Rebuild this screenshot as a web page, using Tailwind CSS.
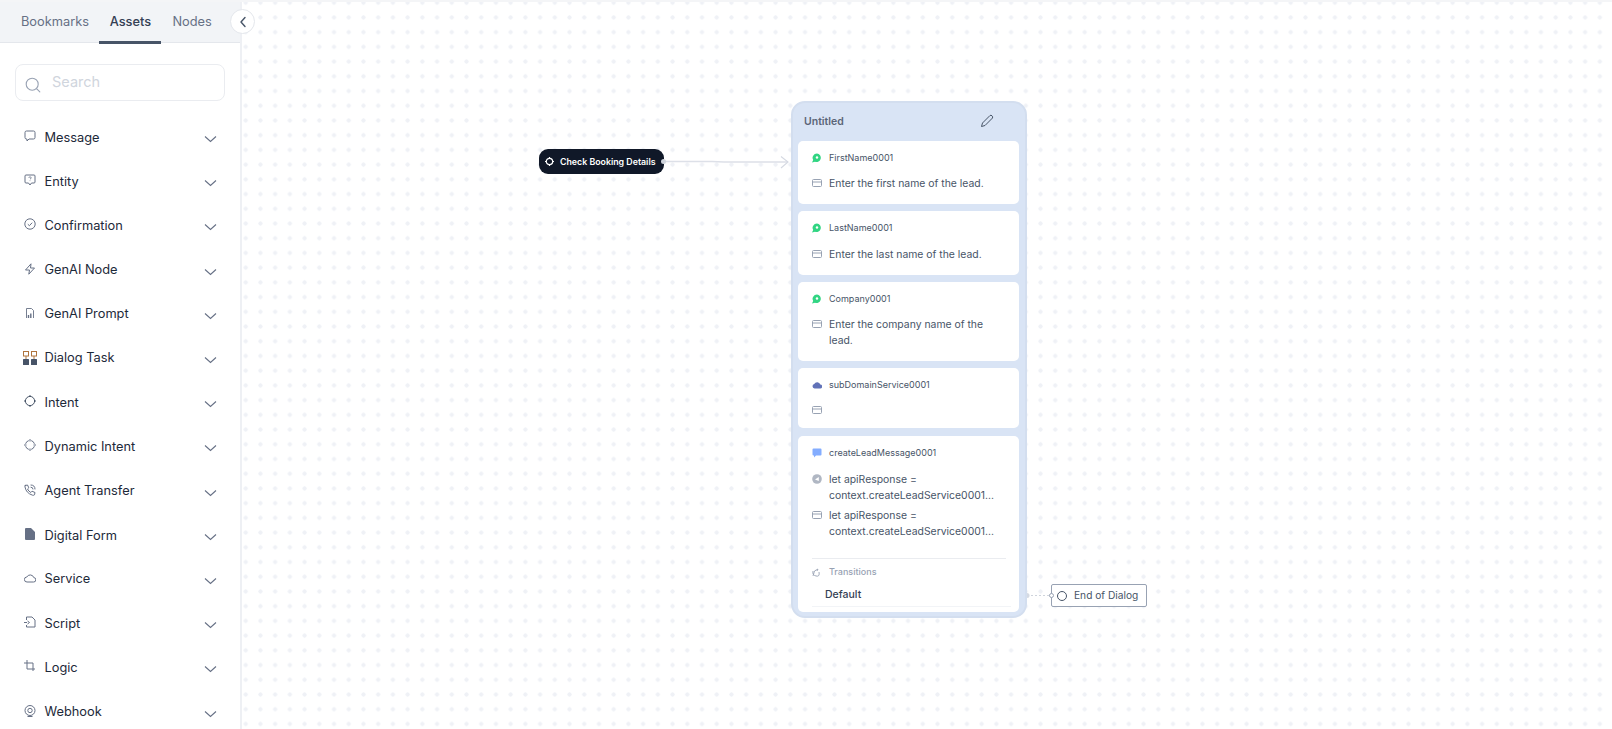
<!DOCTYPE html>
<html lang="en">
<head>
    <meta charset="UTF-8" />
    <title>Dialog Builder</title>
    <script src="https://cdn.jsdelivr.net/npm/@tailwindcss/browser@4"></script>
</head>
<body class="h-[729px] overflow-hidden bg-white font-['Inter',sans-serif] relative">
<div class="absolute left-0 top-0 w-full h-[2px] bg-[#f4f5f7] z-20"></div>
<div class="flex h-[729px]">
    <!-- Left panel -->
    <aside class="w-[242px] shrink-0 bg-white border-r-2 border-[#eef0f4] flex flex-col relative z-10">
        <div class="h-[43px] shrink-0 bg-[#f2f4f7] border-b border-[#e4e7ec] flex pt-[2px] text-[12.8px] text-[#667085]">
            <div class="pl-[21px] pr-[10.500px] pt-[10px]">Bookmarks</div>
            <div class="w-[62px] shrink-0 text-center pt-[10px] font-medium text-[#344054] border-b-[3px] border-[#475467] h-[42px]">Assets</div>
            <div class="pl-[11px] pt-[10px]">Nodes</div>
        </div>
        <div class="absolute left-[230px] top-[9px] w-[25px] h-[25px] rounded-full bg-white border border-[#e4e7ec] flex items-center justify-center">
            <svg class="w-[14px] h-[14px]" viewBox="0 0 14 14" fill="none" stroke="#475467" stroke-width="1.4" stroke-linecap="round" stroke-linejoin="round"><path d="M9 2.500 5 7l4 4.500"/></svg>
        </div>

        <div class="mx-[15px] mt-[21px] h-[37px] shrink-0 border border-[#eaecf0] rounded-lg flex items-center">
            <svg class="w-[16px] h-[16px] ml-[9px] mt-[4px]" viewBox="0 0 16 16" fill="none" stroke="#98a2b3" stroke-width="1.1" stroke-linecap="round"><circle cx="7.200" cy="7.200" r="6"/><path d="m11.800 11.800 3 3"/></svg>
            <span class="ml-[11px] text-[14.500px] text-[#d0d5dd] -mt-[2px]">Search</span>
        </div>

        <ul class="mt-[15px] text-[12.8px] text-[#1d2939]">
            <li class="h-[44.200px] flex items-center pl-[24px] pr-[23px]">
                <svg class="w-[12px] h-[12px] -mt-[4px]" viewBox="0 0 12 12" fill="none" stroke="#667085" stroke-linejoin="round"><path d="M2.500 1h7A1.500 1.500 0 0 1 11 2.500V7.500A1.500 1.500 0 0 1 9.500 9H5L3 11V9H2.500A1.500 1.500 0 0 1 1 7.500V2.500A1.500 1.500 0 0 1 2.500 1Z"/></svg>
                <span class="ml-[8.500px] flex-1 -mt-[1px]">Message</span>
                <svg class="w-[13px] h-[8px] mt-[2px]" viewBox="0 0 13 8" fill="none" stroke="#667085" stroke-width="1.100"><path d="m1 1.500 5.500 5 5.500-5"/></svg>
            </li>
            <li class="h-[44.200px] flex items-center pl-[24px] pr-[23px]">
                <svg class="w-[12px] h-[12px] -mt-[4px]" viewBox="0 0 12 12" fill="none" stroke="#667085" stroke-linejoin="round"><path d="M2 1h8a1 1 0 0 1 1 1v6a1 1 0 0 1-1 1H7.500L6 11 4.500 9H2a1 1 0 0 1-1-1V2a1 1 0 0 1 1-1Z"/><path d="M4.800 3.800Q5 2.800 6 2.800T7.200 3.800Q7.200 4.600 6 5.200M6 6.500v.6" stroke-width=".8"/></svg>
                <span class="ml-[8.500px] flex-1 -mt-[2px]">Entity</span>
                <svg class="w-[13px] h-[8px] mt-[2px]" viewBox="0 0 13 8" fill="none" stroke="#667085" stroke-width="1.100"><path d="m1 1.500 5.500 5 5.500-5"/></svg>
            </li>
            <li class="h-[44.200px] flex items-center pl-[24px] pr-[23px]">
                <svg class="w-[12px] h-[12px] -mt-[4px]" viewBox="0 0 12 12" fill="none" stroke="#667085"><circle cx="6" cy="6" r="5.200"/><path d="m3.800 6.200 1.600 1.500 2.800-3"/></svg>
                <span class="ml-[8.500px] flex-1 -mt-[2px]">Confirmation</span>
                <svg class="w-[13px] h-[8px] mt-[2px]" viewBox="0 0 13 8" fill="none" stroke="#667085" stroke-width="1.100"><path d="m1 1.500 5.500 5 5.500-5"/></svg>
            </li>
            <li class="h-[44.200px] flex items-center pl-[24px] pr-[23px]">
                <svg class="w-[12px] h-[12px] -mt-[4px]" viewBox="0 0 12 12" fill="none" stroke="#667085" stroke-linejoin="round"><path d="M7 .8 1.500 7H5.500L4.800 11.200 10.500 5H6.500Z"/></svg>
                <span class="ml-[8.500px] flex-1 -mt-[2px]">GenAI Node</span>
                <svg class="w-[13px] h-[8px] mt-[2px]" viewBox="0 0 13 8" fill="none" stroke="#667085" stroke-width="1.100"><path d="m1 1.500 5.500 5 5.500-5"/></svg>
            </li>
            <li class="h-[44.200px] flex items-center pl-[24px] pr-[23px]">
                <svg class="w-[12px] h-[12px] -mt-[4px]" viewBox="0 0 12 12" fill="none" stroke="#667085" stroke-width=".9" stroke-linejoin="round"><path d="M2.500 11V1.500H7.500L9.500 3.500V11"/><path d="M4.500 11V8M6.800 11V6.500" stroke-width="1.400"/></svg>
                <span class="ml-[8.500px] flex-1 -mt-[2px]">GenAI Prompt</span>
                <svg class="w-[13px] h-[8px] mt-[2px]" viewBox="0 0 13 8" fill="none" stroke="#667085" stroke-width="1.100"><path d="m1 1.500 5.500 5 5.500-5"/></svg>
            </li>
            <li class="h-[44.200px] flex items-center pl-[23px] pr-[23px]">
                <svg class="w-[14px] h-[14px] -mt-[2px]" viewBox="0 0 14 14" fill="none"><rect x=".5" y=".5" width="5" height="4.500" stroke="#b0743c"/><rect x="8.500" y=".5" width="5" height="4.500" stroke="#b0743c"/><rect x="0" y="8" width="6" height="6" rx=".5" fill="#475467"/><rect x="8" y="8" width="6" height="6" rx=".5" fill="#475467"/><path d="M3 5v3M11 5v3" stroke="#b0743c"/></svg>
                <span class="ml-[7.500px] flex-1 -mt-[2px]">Dialog Task</span>
                <svg class="w-[13px] h-[8px] mt-[2px]" viewBox="0 0 13 8" fill="none" stroke="#667085" stroke-width="1.100"><path d="m1 1.500 5.500 5 5.500-5"/></svg>
            </li>
            <li class="h-[44.200px] flex items-center pl-[24px] pr-[23px]">
                <svg class="w-[12px] h-[12px] -mt-[4px]" viewBox="0 0 12 12" fill="none" stroke="#475467"><circle cx="6" cy="6" r="4.600"/><path d="M6 0v1.400M6 10.600V12M0 6h1.400M10.600 6H12"/></svg>
                <span class="ml-[8.500px] flex-1 -mt-[2px]">Intent</span>
                <svg class="w-[13px] h-[8px] mt-[2px]" viewBox="0 0 13 8" fill="none" stroke="#667085" stroke-width="1.100"><path d="m1 1.500 5.500 5 5.500-5"/></svg>
            </li>
            <li class="h-[44.200px] flex items-center pl-[24px] pr-[23px]">
                <svg class="w-[12px] h-[12px] -mt-[4px]" viewBox="0 0 12 12" fill="none" stroke="#667085"><path d="M7.200 1.600A4.600 4.600 0 0 1 10.400 4.800M10.400 7.200A4.600 4.600 0 0 1 7.200 10.400M4.800 10.400A4.600 4.600 0 0 1 1.600 7.200M1.600 4.800A4.600 4.600 0 0 1 4.800 1.600"/><path d="M6 0v2.500M6 9.500V12M0 6h2.500M9.500 6H12"/></svg>
                <span class="ml-[8.500px] flex-1 -mt-[2px]">Dynamic Intent</span>
                <svg class="w-[13px] h-[8px] mt-[2px]" viewBox="0 0 13 8" fill="none" stroke="#667085" stroke-width="1.100"><path d="m1 1.500 5.500 5 5.500-5"/></svg>
            </li>
            <li class="h-[44.200px] flex items-center pl-[24px] pr-[23px]">
                <svg class="w-[12px] h-[12px] -mt-[4px]" viewBox="0 0 12 12" fill="none" stroke="#667085" stroke-linecap="round" stroke-linejoin="round"><path d="M1.200 1.500 3.500 1 4.800 3.800 3.500 5Q4.500 7.200 6.800 8.500L8 7.200 11 8.500 10.500 10.800Q10 11.500 8.500 11.200 2 9 1 3Q.8 2 1.200 1.500Z"/><path d="M7 1Q11 1 11 5M7 3.200Q9 3.200 9 5"/></svg>
                <span class="ml-[8.500px] flex-1 -mt-[2px]">Agent Transfer</span>
                <svg class="w-[13px] h-[8px] mt-[2px]" viewBox="0 0 13 8" fill="none" stroke="#667085" stroke-width="1.100"><path d="m1 1.500 5.500 5 5.500-5"/></svg>
            </li>
            <li class="h-[44.200px] flex items-center pl-[24px] pr-[23px]">
                <svg class="w-[12px] h-[12px] -mt-[4px]" viewBox="0 0 12 12" fill="#667085"><path d="M2 0H7L11 4V11A1 1 0 0 1 10 12H2A1 1 0 0 1 1 11V1A1 1 0 0 1 2 0Z"/></svg>
                <span class="ml-[8.500px] flex-1 -mt-[1px]">Digital Form</span>
                <svg class="w-[13px] h-[8px] mt-[2px]" viewBox="0 0 13 8" fill="none" stroke="#667085" stroke-width="1.100"><path d="m1 1.500 5.500 5 5.500-5"/></svg>
            </li>
            <li class="h-[44.200px] flex items-center pl-[24px] pr-[23px]">
                <svg class="w-[12px] h-[12px] -mt-[4px]" viewBox="0 0 12 12" fill="none" stroke="#667085" stroke-linejoin="round"><path d="M3 10H9.500A2.200 2.200 0 0 0 9.800 5.600 3.800 3.800 0 0 0 2.800 5 2.500 2.500 0 0 0 3 10Z"/></svg>
                <span class="ml-[8.500px] flex-1 -mt-[2px]">Service</span>
                <svg class="w-[13px] h-[8px] mt-[2px]" viewBox="0 0 13 8" fill="none" stroke="#667085" stroke-width="1.100"><path d="m1 1.500 5.500 5 5.500-5"/></svg>
            </li>
            <li class="h-[44.200px] flex items-center pl-[24px] pr-[23px]">
                <svg class="w-[12px] h-[12px] -mt-[4px]" viewBox="0 0 12 12" fill="none" stroke="#667085" stroke-linejoin="round"><path d="M2.500 4V1H8L11 4V11H2.500V9"/><path d="M0 6.500H3M3.500 5 5.500 6.500 3.500 8"/></svg>
                <span class="ml-[8.500px] flex-1 -mt-[2px]">Script</span>
                <svg class="w-[13px] h-[8px] mt-[2px]" viewBox="0 0 13 8" fill="none" stroke="#667085" stroke-width="1.100"><path d="m1 1.500 5.500 5 5.500-5"/></svg>
            </li>
            <li class="h-[44.200px] flex items-center pl-[24px] pr-[23px]">
                <svg class="w-[12px] h-[12px] -mt-[4px]" viewBox="0 0 12 12" fill="none" stroke="#667085"><path d="M3 0V9H11M0 3H9V11"/></svg>
                <span class="ml-[8.500px] flex-1 -mt-[2px]">Logic</span>
                <svg class="w-[13px] h-[8px] mt-[2px]" viewBox="0 0 13 8" fill="none" stroke="#667085" stroke-width="1.100"><path d="m1 1.500 5.500 5 5.500-5"/></svg>
            </li>
            <li class="h-[44.200px] flex items-center pl-[24px] pr-[23px]">
                <svg class="w-[12px] h-[12px] -mt-[4px]" viewBox="0 0 12 12" fill="none" stroke="#667085"><circle cx="6" cy="5.500" r="5"/><circle cx="6" cy="5.500" r="2.200"/><path d="M3.500 11.500h5"/></svg>
                <span class="ml-[8.500px] flex-1 -mt-[2px]">Webhook</span>
                <svg class="w-[13px] h-[8px] mt-[2px]" viewBox="0 0 13 8" fill="none" stroke="#667085" stroke-width="1.100"><path d="m1 1.500 5.500 5 5.500-5"/></svg>
            </li>
        </ul>
    </aside>

    <!-- Canvas -->
    <main class="relative flex-1 bg-[radial-gradient(circle,#eff1f6_1.800px,transparent_2.400px)] bg-[length:14.720px_14.720px] bg-[position:-3.660px_-4.660px]">
        <!-- connectors -->
        <svg class="absolute left-0 top-0 w-[1370px] h-[729px]" fill="none">
            <path d="M421 161.500H470Q476 161.500 482 162H546" stroke="#dde0e8" stroke-width="1.500"/>
            <path d="M539 156.500 546 162 539 168" stroke="#d5d9e2" stroke-width="1.100"/>
            <path d="M785 595.500H808" stroke="#cfd4dc" stroke-dasharray="2 2"/>
            <circle cx="785" cy="595.500" r="2.500" fill="#d5dae3"/>
        </svg>

        <!-- start node -->
        <div class="absolute left-[297px] top-[149px] w-[125px] h-[25px] rounded-[9px] bg-[#101828] flex items-center pl-[6px] text-[8.800px] font-semibold text-white whitespace-nowrap">
            <svg class="w-[9px] h-[9px]" viewBox="0 0 9 9" fill="none" stroke="#fff" stroke-width="1.200"><circle cx="4.500" cy="4.500" r="3.200"/><path d="M4.500 0v1.300M4.500 7.700V9M0 4.500h1.300M7.700 4.500H9"/></svg>
            <span class="ml-[6px]">Check Booking Details</span>
            <span class="absolute -right-[2px] top-[10px] w-[5px] h-[5px] rounded-full bg-[#d0d5dd]"></span>
        </div>

        <!-- dialog task node -->
        <div class="absolute left-[549px] top-[101px] w-[236px] h-[517px] rounded-[14px] bg-[#d9e4f5] border-2 border-[#d3deef] pl-[5px] pr-[6px] text-[#475467]">
            <div class="h-[38px] flex items-center justify-between pl-[6px] pr-[25px]">
                <span class="text-[10.500px] font-semibold text-[#5b6577] -mt-[1px]">Untitled</span>
                <svg class="w-[14px] h-[14px] -mt-[3px]" viewBox="0 0 14 14" fill="none" stroke="#475467" stroke-linejoin="round"><path d="M1.500 12.500 2.500 9 10 1.500Q11 .8 12 1.800T12.500 4L5 11.500Z"/></svg>
            </div>

            <div class="h-[63px] bg-white rounded-[5px] pl-[14px] pt-[11px] mb-[7px]">
                <div class="flex items-center h-[12px] text-[9px]">
                    <svg class="w-[10px] h-[10px]" viewBox="0 0 10 10"><path d="M5 .5A4.300 4.300 0 1 1 3 8.800L0 9.500 1.200 7A4.300 4.300 0 0 1 5 .5Z" fill="#32d583"/><circle cx="5" cy="4.500" r="1.200" fill="#fff"/></svg>
                    <span class="ml-[7px]">FirstName0001</span>
                </div>
                <div class="flex items-start mt-[12px] text-[10.400px] leading-[15.500px]">
                    <svg class="w-[10px] h-[8px] mt-[3px] shrink-0" viewBox="0 0 10 8" fill="none" stroke="#98a2b3"><rect x=".5" y=".5" width="9" height="7" rx="1"/><path d="M1 3H9"/></svg>
                    <span class="ml-[7px]">Enter the first name of the lead.</span>
                </div>
            </div>

            <div class="h-[64px] bg-white rounded-[5px] pl-[14px] pt-[11px] mb-[7px]">
                <div class="flex items-center h-[12px] text-[9px]">
                    <svg class="w-[10px] h-[10px]" viewBox="0 0 10 10"><path d="M5 .5A4.300 4.300 0 1 1 3 8.800L0 9.500 1.200 7A4.300 4.300 0 0 1 5 .5Z" fill="#32d583"/><circle cx="5" cy="4.500" r="1.200" fill="#fff"/></svg>
                    <span class="ml-[7px]">LastName0001</span>
                </div>
                <div class="flex items-start mt-[13px] text-[10.400px] leading-[15.500px]">
                    <svg class="w-[10px] h-[8px] mt-[3px] shrink-0" viewBox="0 0 10 8" fill="none" stroke="#98a2b3"><rect x=".5" y=".5" width="9" height="7" rx="1"/><path d="M1 3H9"/></svg>
                    <span class="ml-[7px]">Enter the last name of the lead.</span>
                </div>
            </div>

            <div class="h-[79px] bg-white rounded-[5px] pl-[14px] pt-[11px] mb-[7px]">
                <div class="flex items-center h-[12px] text-[9px]">
                    <svg class="w-[10px] h-[10px]" viewBox="0 0 10 10"><path d="M5 .5A4.300 4.300 0 1 1 3 8.800L0 9.500 1.200 7A4.300 4.300 0 0 1 5 .5Z" fill="#32d583"/><circle cx="5" cy="4.500" r="1.200" fill="#fff"/></svg>
                    <span class="ml-[7px]">Company0001</span>
                </div>
                <div class="flex items-start mt-[12px] text-[10.400px] leading-[15.500px] pr-[20px]">
                    <svg class="w-[10px] h-[8px] mt-[3px] shrink-0" viewBox="0 0 10 8" fill="none" stroke="#98a2b3"><rect x=".5" y=".5" width="9" height="7" rx="1"/><path d="M1 3H9"/></svg>
                    <span class="ml-[7px]">Enter the company name of the lead.</span>
                </div>
            </div>

            <div class="h-[60px] bg-white rounded-[5px] pl-[14px] pt-[11px] mb-[8px]">
                <div class="flex items-center h-[12px] text-[9px]">
                    <svg class="w-[10px] h-[10px]" viewBox="0 0 10 10" fill="#6172b8"><path d="M2.500 8.500H8A2 2 0 0 0 8.300 4.500 3.300 3.300 0 0 0 2.200 4 2.300 2.300 0 0 0 2.500 8.500Z"/></svg>
                    <span class="ml-[7px]">subDomainService0001</span>
                </div>
                <div class="flex items-start mt-[12px]">
                    <svg class="w-[10px] h-[8px] mt-[3px] shrink-0" viewBox="0 0 10 8" fill="none" stroke="#98a2b3"><rect x=".5" y=".5" width="9" height="7" rx="1"/><path d="M1 3H9"/></svg>
                </div>
            </div>

            <div class="h-[176px] bg-white rounded-[5px] pl-[14px] pt-[11px]">
                <div class="flex items-center h-[12px] text-[9px]">
                    <svg class="w-[10px] h-[10px]" viewBox="0 0 10 10" fill="#84adff"><path d="M1.500 .5H8.500A1 1 0 0 1 9.500 1.500V6.500A1 1 0 0 1 8.500 7.500H4L2 9.500V7.500H1.500A1 1 0 0 1 .5 6.500V1.500A1 1 0 0 1 1.500 .5Z"/></svg>
                    <span class="ml-[7px]">createLeadMessage0001</span>
                </div>
                <div class="flex items-start mt-[13px] text-[10.400px] leading-[15.500px]">
                    <svg class="w-[10px] h-[10px] mt-[2px] shrink-0" viewBox="0 0 10 10"><circle cx="5" cy="5" r="4.800" fill="#b0b7c3"/><path d="M6.800 3 3 5.500 6.800 7Z" fill="#fff"/></svg>
                    <span class="ml-[7px]">let apiResponse =<br />context.createLeadService0001...</span>
                </div>
                <div class="flex items-start mt-[5px] text-[10.400px] leading-[15.500px]">
                    <svg class="w-[10px] h-[8px] mt-[3px] shrink-0" viewBox="0 0 10 8" fill="none" stroke="#98a2b3"><rect x=".5" y=".5" width="9" height="7" rx="1"/><path d="M1 3H9"/></svg>
                    <span class="ml-[7px]">let apiResponse =<br />context.createLeadService0001...</span>
                </div>
                <div class="mr-[13px] mt-[19px] border-t border-[#eaecf0] h-[27px] flex items-center text-[9px] font-medium text-[#98a2b3]">
                    <svg class="w-[8px] h-[9px]" viewBox="0 0 8 9" fill="none" stroke="#98a2b3" stroke-width=".9"><path d="M1 3Q0 7 4 8T7 4M1 8 2.500 3 6 1 5 3"/></svg>
                    <span class="ml-[9px]">Transitions</span>
                </div>
                <div class="ml-[13px] mr-[13px] h-[21px] pb-[2px] text-[10.500px] font-medium text-[#344054] flex items-center">Default</div>
                <div class="mr-[8px] border-t border-[#f2f4f7]"></div>
            </div>
        </div>

        <!-- end node -->
        <div class="absolute left-[809px] top-[584px] w-[96px] h-[23px] bg-white border border-[#98a2b3] rounded-[2px] flex items-center pl-[5px] text-[10.200px] text-[#475467]">
            <span class="w-[10px] h-[10px] rounded-full border border-[#475467]"></span>
            <span class="ml-[7px]">End of Dialog</span>
            <span class="absolute -left-[3px] top-[8px] w-[5px] h-[5px] rounded-full bg-white border border-[#98a2b3]"></span>
        </div>
    </main>
</div>
</body>
</html>
